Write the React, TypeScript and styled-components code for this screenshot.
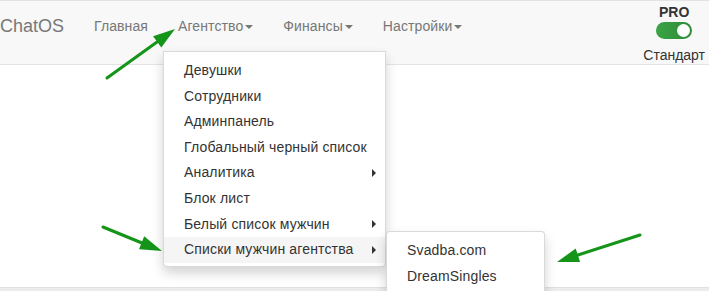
import styled, { createGlobalStyle } from 'styled-components'

type MenuEntry = {
  label: string
  sub?: string[]
  active?: boolean
}

const agencyMenu: MenuEntry[] = [
  { label: 'Девушки' },
  { label: 'Сотрудники' },
  { label: 'Админпанель' },
  { label: 'Глобальный черный список' },
  { label: 'Аналитика', sub: [] },
  { label: 'Блок лист' },
  { label: 'Белый список мужчин', sub: [] },
  {
    label: 'Списки мужчин агентства',
    sub: ['Svadba.com', 'DreamSingles'],
    active: true,
  },
]

const navItems = [
  { label: 'Главная' },
  { label: 'Агентство', dropdown: true, open: true },
  { label: 'Финансы', dropdown: true },
  { label: 'Настройки', dropdown: true },
]

const GlobalStyle = createGlobalStyle`
  html, body {
    margin: 0;
    padding: 0;
    background: #fff;
  }

  body {
    font-family: 'Liberation Sans', Arial, sans-serif;
    font-size: 14px;
    color: #333;
  }

  * {
    box-sizing: border-box;
  }
`

const Arrow = ({ d, head }: { d: string; head: string }) => (
  <g>
    <path d={d} stroke="#14951a" strokeWidth={3} strokeLinecap="round" />
    <polygon points={head} fill="#14951a" />
  </g>
)

export default function App() {
  return (
    <Page>
      <GlobalStyle />
      <Navbar>
        <Brand>ChatOS</Brand>
        <NavList>
          {navItems.map((item) => (
            <NavItem key={item.label}>
              <NavLink>
                {item.label}
                {item.dropdown && <Caret />}
              </NavLink>
              {item.open && (
                <Dropdown>
                  {agencyMenu.map((entry) => (
                    <MenuItem key={entry.label} $active={entry.active}>
                      {entry.label}
                      {entry.sub && <SubCaret />}
                      {entry.sub && entry.sub.length > 0 && (
                        <SubMenu>
                          {entry.sub.map((s) => (
                            <MenuItem key={s}>{s}</MenuItem>
                          ))}
                        </SubMenu>
                      )}
                    </MenuItem>
                  ))}
                </Dropdown>
              )}
            </NavItem>
          ))}
        </NavList>
        <PlanSwitch>
          <PlanLabel $bold>PRO</PlanLabel>
          <Toggle>
            <Knob />
          </Toggle>
          <PlanLabel>Стандарт</PlanLabel>
        </PlanSwitch>
      </Navbar>
      <Content />
      <BottomStrip />
      <Annotations width={709} height={291} viewBox="0 0 709 291">
        <Arrow d="M107 78 L157 42" head="175,29 161.3,47.6 153.1,36.2" />
        <Arrow d="M103 227 L142 243" head="162,251 139,249.2 144.2,236.2" />
        <Arrow d="M640 235 L578 255" head="557,262 575.7,248.5 580.1,261.9" />
      </Annotations>
    </Page>
  )
}

const Page = styled.div`
  position: relative;
  width: 709px;
  height: 291px;
  overflow: hidden;
  display: flex;
  flex-direction: column;
`

const Navbar = styled.nav`
  display: flex;
  align-items: flex-start;
  height: 65px;
  background: #f8f8f8;
  border-top: 1px solid #e3e3e3;
  border-bottom: 1px solid #e3e3e3;
  position: relative;
  z-index: 2;
`

const Brand = styled.a`
  padding: 15px 15px 15px 0;
  font-size: 18px;
  line-height: 20px;
  color: #777;
`

const NavList = styled.ul`
  display: flex;
  list-style: none;
  margin: 0;
  padding: 0;
  flex: 1;
`

const NavItem = styled.li`
  position: relative;
`

const NavLink = styled.a`
  display: block;
  padding: 15px;
  line-height: 20px;
  color: #777;
  font-size: 14px;
  letter-spacing: 0.1px;
`

const Caret = styled.span`
  display: inline-block;
  width: 0;
  height: 0;
  margin-left: 2px;
  vertical-align: middle;
  border-top: 4px solid #777;
  border-left: 4px solid transparent;
  border-right: 4px solid transparent;
`

const Dropdown = styled.ul`
  position: absolute;
  top: 100%;
  left: 0;
  width: 223px;
  margin: 0;
  padding: 6px 0 3px;
  list-style: none;
  background: #fff;
  border: 1px solid rgba(0, 0, 0, 0.15);
  border-radius: 0 0 4px 4px;
  box-shadow: 0 6px 12px rgba(0, 0, 0, 0.175);
  letter-spacing: 0.15px;
`

const MenuItem = styled.li<{ $active?: boolean }>`
  position: relative;
  padding: 3px 20px;
  line-height: 19.6px;
  font-size: 14px;
  color: #333;
  white-space: nowrap;
  background: ${({ $active }) => ($active ? '#f5f5f5' : 'transparent')};
`

const SubCaret = styled.span`
  position: absolute;
  right: 9px;
  top: 50%;
  margin-top: -4px;
  width: 0;
  height: 0;
  border-left: 4px solid #333;
  border-top: 4px solid transparent;
  border-bottom: 4px solid transparent;
`

const SubMenu = styled.ul`
  position: absolute;
  left: 100%;
  top: 0;
  margin: -6px 0 0 1px;
  width: 159px;
  padding: 6px 0 3px;
  list-style: none;
  background: #fff;
  border: 1px solid rgba(0, 0, 0, 0.15);
  border-radius: 4px;
  box-shadow: 0 6px 12px rgba(0, 0, 0, 0.175);
`

const PlanSwitch = styled.div`
  display: flex;
  flex-direction: column;
  align-items: center;
  padding: 3px 4px 0 0;
`

const PlanLabel = styled.span<{ $bold?: boolean }>`
  font-size: 14px;
  line-height: ${({ $bold }) => ($bold ? '16px' : '20px')};
  font-weight: ${({ $bold }) => ($bold ? 700 : 400)};
  color: #333;
  margin-top: ${({ $bold }) => ($bold ? '0' : '6px')};
`

const Toggle = styled.div`
  display: flex;
  justify-content: flex-end;
  align-items: center;
  width: 36px;
  height: 17px;
  margin-top: 2px;
  padding: 0 2px;
  border-radius: 9px;
  background: linear-gradient(to right, #3aa445, #2f8a36);
`

const Knob = styled.span`
  width: 13px;
  height: 13px;
  border-radius: 50%;
  background: #fff;
`

const Content = styled.main`
  flex: 1;
  background: #fff;
`

const BottomStrip = styled.div`
  height: 4px;
  background: #ececec;
  border-top: 1px solid #e0e0e0;
`

const Annotations = styled.svg`
  position: absolute;
  inset: 0;
  pointer-events: none;
  z-index: 5;
`
